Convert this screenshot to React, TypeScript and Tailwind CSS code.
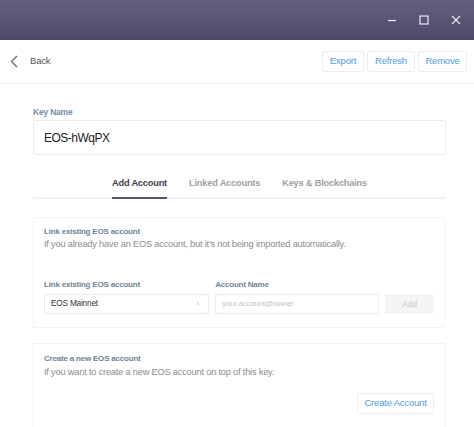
export default function App() {
  return (
    <div
      className="w-[474px] h-[427px] overflow-hidden bg-white flex flex-col"
      style={{ fontFamily: '"Liberation Sans", Arial, sans-serif' }}
    >
      {/* window title bar */}
      <div className="h-[40px] shrink-0 bg-gradient-to-b from-[#645f80] to-[#4f4a67] flex items-center justify-end pr-[13px] gap-[22px]">
        <svg width="10" height="10" viewBox="0 0 10 10">
          <path d="M1 5.5h8" stroke="#e4e2ee" strokeWidth="1.3" />
        </svg>
        <svg width="10" height="10" viewBox="0 0 10 10">
          <rect x="1" y="1" width="8" height="8" fill="none" stroke="#e4e2ee" strokeWidth="1.3" />
        </svg>
        <svg width="10" height="10" viewBox="0 0 10 10">
          <path d="M1 1l8 8M9 1l-8 8" stroke="#e4e2ee" strokeWidth="1.3" />
        </svg>
      </div>

      {/* header */}
      <div className="h-[44px] shrink-0 border-b border-[#f0f0f3] flex items-center pl-[10px] pr-[7px]">
        <svg width="8" height="13" viewBox="0 0 8 13" className="mr-[12px]">
          <path d="M7 1L1.5 6.5L7 12" fill="none" stroke="#666" strokeWidth="1.3" />
        </svg>
        <span className="text-[9.5px] tracking-[-0.2px] text-[#555]">Back</span>
        <div className="ml-auto flex gap-[3px]">
          <button className="h-[21px] w-[42px] border border-[#e9eef5] rounded-[2px] text-[9.5px] tracking-[-0.2px] text-[#4d9de6]">Export</button>
          <button className="h-[21px] w-[48px] border border-[#e9eef5] rounded-[2px] text-[9.5px] tracking-[-0.2px] text-[#4d9de6]">Refresh</button>
          <button className="h-[21px] w-[49px] border border-[#e9eef5] rounded-[2px] text-[9.5px] tracking-[-0.2px] text-[#4d9de6]">Remove</button>
        </div>
      </div>

      {/* content */}
      <div className="pl-[33px] pr-[28px] pt-[22px]">
        <div className="text-[8.5px] tracking-[-0.2px] font-bold text-[#7b8fa2] leading-[12px]">Key Name</div>
        <div className="mt-[2px] h-[35px] border border-[#ebebeb] rounded-[2px] flex items-center px-[10px] text-[12px] tracking-[-0.5px] text-[#222]">
          EOS-hWqPX
        </div>

        {/* tabs */}
        <div className="mt-[22px] border-b-2 border-[#f1f1f3] flex justify-center gap-[22px]">
          <div className="pb-[8px] leading-[12px] text-[9.25px] tracking-[-0.2px] font-bold text-[#3f3d4d] border-b-2 border-[#5a5670] -mb-[2px]">Add Account</div>
          <div className="pb-[8px] leading-[12px] text-[9.25px] tracking-[-0.2px] font-bold text-[#a0a0a6]">Linked Accounts</div>
          <div className="pb-[8px] leading-[12px] text-[9.25px] tracking-[-0.2px] font-bold text-[#a0a0a6]">Keys &amp; Blockchains</div>
        </div>

        {/* link existing card */}
        <div className="mt-[18px] mr-[1px] border border-[#f3f3f4] px-[10px] pt-[8px] pb-[13px]">
          <div className="text-[8px] tracking-[-0.2px] font-bold text-[#6f8495] leading-[12px]">Link existing EOS account</div>
          <div className="text-[9.25px] tracking-[-0.2px] text-[#8c8c8c] leading-[12px]">
            If you already have an EOS account, but it's not being imported automatically.
          </div>
          <div className="mt-[29px] flex items-end gap-[6px]">
            <div className="w-[166px]">
              <div className="text-[8px] tracking-[-0.2px] font-bold text-[#6f8495] leading-[12px]">Link existing EOS account</div>
              <div className="mt-[3px] h-[20px] border border-[#ebebeb] rounded-[2px] flex items-center pl-[6px] pr-[9px] text-[8.25px] tracking-[-0.2px] text-[#333]">
                EOS Mainnet
                <span className="ml-auto text-[#bbb] text-[8px]">‹</span>
              </div>
            </div>
            <div className="w-[165px]">
              <div className="text-[8px] tracking-[-0.2px] font-bold text-[#6f8495] leading-[12px]">Account Name</div>
              <div className="mt-[3px] h-[20px] border border-[#ebebeb] rounded-[2px] flex items-center px-[6px] text-[8px] tracking-[-0.2px] text-[#c4c4c4]">
                your.account@owner
              </div>
            </div>
            <button className="h-[20px] w-[49px] bg-[#f5f5f6] rounded-[2px] text-[8.5px] text-[#c8c8c8]">Add</button>
          </div>
        </div>

        {/* create account card */}
        <div className="mt-[15px] mr-[1px] border border-[#f3f3f4] px-[10px] pt-[9px] h-[120px]">
          <div className="text-[8px] tracking-[-0.2px] font-bold text-[#6f8495] leading-[12px]">Create a new EOS account</div>
          <div className="mt-[1px] text-[9.25px] tracking-[-0.2px] text-[#8c8c8c] leading-[12px]">
            If you want to create a new EOS account on top of this key.
          </div>
          <div className="mt-[15px] flex justify-end">
            <button className="h-[21px] w-[77px] border border-[#e9eef5] rounded-[2px] text-[9.5px] tracking-[-0.2px] text-[#4d9de6]">
              Create Account
            </button>
          </div>
        </div>
      </div>
    </div>
  );
}
